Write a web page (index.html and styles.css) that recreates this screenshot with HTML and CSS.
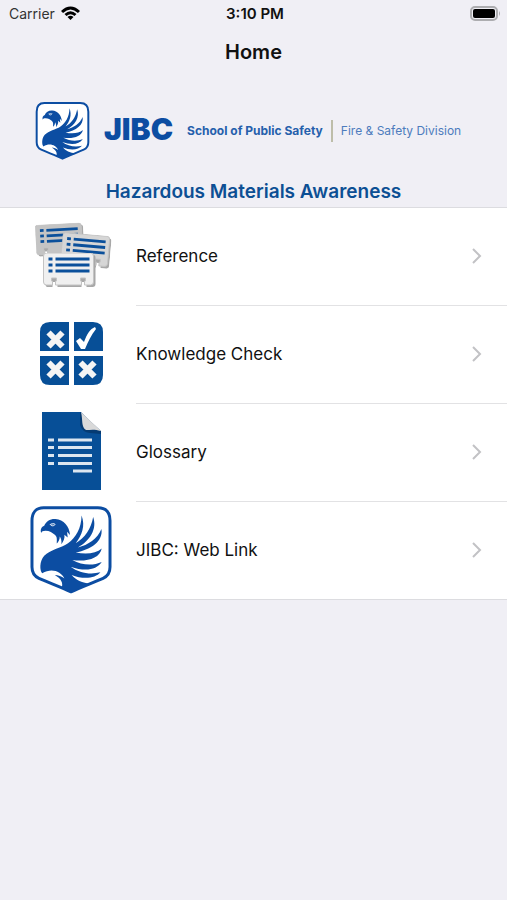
FILE: index.html
```
<!DOCTYPE html>
<html lang="en">
<head>
<meta charset="utf-8">
<meta name="viewport" content="width=device-width, initial-scale=1">
<title>Home</title>
<link rel="stylesheet" href="styles.css">
</head>
<body>
<svg class="defs" aria-hidden="true">
  <symbol id="eagle" viewBox="7 14 248 265">
    <path fill="#fff" stroke="#0c4da2" stroke-width="9" stroke-linejoin="round" d="M48 19H212C238 19 249 35 249 58V198C249 215 242 226 228 232C196 246 163 258 131 273C99 258 66 246 34 232C20 226 13 215 13 198V58C13 35 24 19 48 19Z"/>
    <path fill="#0c4da2" d="M41 95C37 84 42 76 50 73C56 60 68 52 84 53C109 55 126 75 128 101L119 91L121 109L111 100C113 111 108 120 102 129C103 119 101 112 97 106C97 116 93 122 88 127C88 117 90 108 83 101C75 94 66 88 54 88C46 88 42 90 41 95Z"/>
    <path fill="none" stroke="#fff" stroke-width="3" stroke-linecap="round" d="M68 69C71 75 80 75 83 69M71 68L80 67"/>
    <path fill="#0c4da2" d="M44 217C36 210 35 180 50 164C68 145 100 141 122 126C146 108 162 81 163 42C175 74 164 101 145 126C173 110 192 83 198 47C211 83 188 119 152 139C183 131 211 113 223 83C229 119 192 146 145 154C178 160 207 157 224 142C218 172 180 183 135 177C164 193 197 195 224 183C208 208 172 212 130 197C155 216 189 222 220 214C205 233 167 236 133 222C145 237 164 246 193 249C172 256 151 263 131 273C123 270 114 266 103 261C108 246 101 233 82 222C92 222 103 226 111 233C101 211 72 200 44 217Z"/>
  </symbol>
  <symbol id="card" viewBox="0 0 52 34">
    <path fill="#a8a8a8" d="M4 2H50Q52 2 52 5V31Q52 34 49 34H43V29H38V34H14V29H9V34H4Q2 34 2 31V5Z"/>
    <path class="card-face" d="M3 0H47Q50 0 50 3V29Q50 32 47 32H41V28H42V25H37V28H38V32H12V28H13V25H8V28H9V32H3Q0 32 0 29V3Q0 0 3 0Z"/>
    <path stroke="#0b509b" stroke-width="3" d="M5 6H9M12 6H46M5 12H9M12 12H46M5 18H9M12 18H46"/>
  </symbol>
  <symbol id="chevron" viewBox="0 0 10 16">
    <path fill="none" stroke="#c2c2c5" stroke-width="2" d="M1 1L8 8L1 15"/>
  </symbol>
</svg>

<header class="top">
  <div class="status">
    <div class="carrier">Carrier
      <svg width="19" height="15" viewBox="0 0 19 15" aria-hidden="true">
        <path fill="none" stroke="#000" stroke-width="3" d="M1 6Q9.500 -2 18 6M4.500 9Q9.500 4.500 14.500 9"/>
        <path d="M6.500 11Q9.500 8.500 12.500 11L9.500 14Z"/>
      </svg>
    </div>
    <div class="time">3:10 PM</div>
    <svg class="battery" width="31" height="15" viewBox="0 0 31 15" aria-hidden="true">
      <rect x="1" y="1" width="26" height="13" rx="4" fill="none" stroke="#adadb0" stroke-width="2"/>
      <rect x="3" y="3" width="22" height="9" rx="2"/>
      <path fill="#adadb0" d="M29 5Q31 7.500 29 10Z"/>
    </svg>
  </div>
  <h1>Home</h1>
  <div class="brand">
    <svg class="brand-mark" aria-hidden="true"><use href="#eagle"/></svg>
    <span class="brand-name">JIBC</span>
    <span class="school">School of Public Safety</span>
    <span class="division">Fire &amp; Safety Division</span>
  </div>
  <h2>Hazardous Materials Awareness</h2>
</header>

<nav class="menu">
  <a class="row" href="#reference">
    <svg class="icon" viewBox="0 0 84 92" aria-hidden="true">
      <g transform="translate(5 15) rotate(-3)" fill="#c4c4c4"><use href="#card" width="48" height="32"/></g>
      <g transform="translate(33 22) rotate(5)" fill="#d6d6d6"><use href="#card" width="49" height="33"/></g>
      <g transform="translate(13 43)" fill="#f0f0f0"><use href="#card" width="53" height="34"/></g>
    </svg>
    <span class="label">Reference</span>
    <svg class="chevron" aria-hidden="true"><use href="#chevron"/></svg>
  </a>
  <a class="row" href="#knowledge-check">
    <svg class="icon" viewBox="0 0 84 92" aria-hidden="true">
      <path fill="#074f97" d="M20 14H39V43H10V24Q10 14 20 14ZM44 14H63Q73 14 73 24V43H44ZM10 48H39V77H20Q10 77 10 67ZM44 48H73V67Q73 77 63 77H44Z"/>
      <path stroke="#f4f4f4" stroke-width="6" fill="none" d="M18.500 24.500L32.500 38.500M32.500 24.500L18.500 38.500M18.500 54.500L32.500 68.500M32.500 54.500L18.500 68.500M50.500 54.500L64.500 68.500M64.500 54.500L50.500 68.500"/>
      <path fill="#fff" d="M46 33L50 30L54 34C57 26 60 21 65 19L66 21C61 27 58 34 55 41L51 41Z"/>
    </svg>
    <span class="label">Knowledge Check</span>
    <svg class="chevron" aria-hidden="true"><use href="#chevron"/></svg>
  </a>
  <a class="row" href="#glossary">
    <svg class="icon" viewBox="0 0 84 92" aria-hidden="true">
      <path fill="#074f97" d="M12 6H51L71 26V84H12Z"/>
      <path fill="#053b73" d="M50 6V19Q52 26 60 27L71 28V25Z"/>
      <path fill="#d9d9d9" d="M51 6L71 25C64 23 61 24 56 24C51 21 53 14 51 6Z"/>
      <path stroke="#dce6f0" stroke-width="3" d="M18 34H24M28 34H62M18 41.500H24M28 41.500H62M18 49.500H24M28 49.500H62M18 57.500H24M28 57.500H62M43 65H62"/>
    </svg>
    <span class="label">Glossary</span>
    <svg class="chevron" aria-hidden="true"><use href="#chevron"/></svg>
  </a>
  <a class="row" href="#web-link">
    <svg class="icon emblem" aria-hidden="true"><use href="#eagle"/></svg>
    <span class="label">JIBC: Web Link</span>
    <svg class="chevron" aria-hidden="true"><use href="#chevron"/></svg>
  </a>
</nav>
</body>
</html>
```
FILE: styles.css
```
* { box-sizing: border-box; }

body {
  margin: 0;
  min-height: 100vh;
  background: #f0eff5;
  color: #111;
  font-family: Inter, "Liberation Sans", sans-serif;
}

.defs { display: none; }

.status {
  display: grid;
  grid-template-columns: 1fr auto 1fr;
  align-items: center;
  height: 26px;
  padding: 0 6px 0 9px;
  font-size: 14px;
}

.carrier {
  display: flex;
  align-items: center;
  gap: 6px;
  color: #333;
}

.time {
  font-size: 15px;
  font-weight: 600;
}

.battery { justify-self: end; }

h1, h2 {
  margin: 0;
  font-size: 20px;
  font-weight: 600;
  line-height: 24px;
  text-align: center;
}

h1 { padding-top: 14px; }

.brand {
  display: flex;
  align-items: center;
  height: 58px;
  margin: 38px 35px 0;
  color: #2560ac;
  font-size: 12px;
  line-height: 22px;
  white-space: nowrap;
}

.brand-mark {
  flex: none;
  width: 55px;
  height: 58px;
}

.brand-name {
  margin: 0 14px;
  padding-bottom: 4px;
  color: #0c4da2;
  font-size: 30px;
  font-weight: 900;
}

.school {
  padding-right: 8px;
  border-right: 2px solid #bdbda9;
  font-weight: 700;
}

.division {
  padding-left: 8px;
  color: #4d7cbd;
}

h2 {
  padding: 20px 0 3px;
  color: #0d4f94;
  font-size: 19px;
}

.menu {
  display: grid;
  gap: 1px;
  background: #fff;
  border-top: 1px solid #dcdce0;
  border-bottom: 1px solid #dcdce0;
}

.row {
  position: relative;
  display: flex;
  align-items: center;
  height: 97px;
  padding: 0 25px 2px 30px;
  color: inherit;
  font-size: 17px;
  text-decoration: none;
}

.row:not(:last-child)::after {
  content: "";
  position: absolute;
  right: 0;
  bottom: -1px;
  left: 136px;
  height: 1px;
  background: #e2e2e4;
}

.icon {
  flex: none;
  width: 84px;
  height: 92px;
}

.emblem {
  width: 82px;
  height: 88px;
  margin-right: 2px;
}

.card-face {
  fill: inherit;
  stroke: #c4c4c4;
}

.label {
  flex: 1;
  margin-left: 22px;
}

.chevron {
  width: 10px;
  height: 16px;
}
```
